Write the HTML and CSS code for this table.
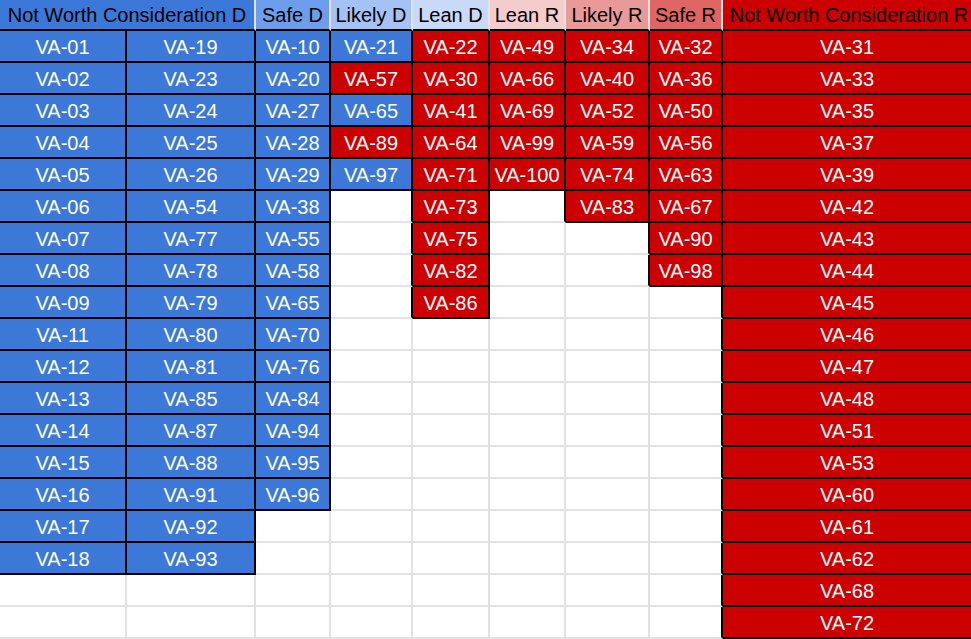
FILE: index.html
```html
<!DOCTYPE html>
<html lang="en">
<head>
<meta charset="utf-8">
<title>Virginia districts</title>
<link rel="stylesheet" href="styles.css">
</head>
<body>
<div class="sheet">
  <div class="h h1 span2">Not Worth Consideration D</div>
  <div class="h h2">Safe D</div>
  <div class="h h3">Likely D</div>
  <div class="h h4">Lean D</div>
  <div class="h h5">Lean R</div>
  <div class="h h6">Likely R</div>
  <div class="h h7">Safe R</div>
  <div class="h h8 last">Not Worth Consideration R</div>

  <div class="c b">VA-01</div><div class="c b">VA-19</div><div class="c b">VA-10</div><div class="c b">VA-21</div><div class="c r">VA-22</div><div class="c r">VA-49</div><div class="c r">VA-34</div><div class="c r">VA-32</div><div class="c r">VA-31</div>
  <div class="c b">VA-02</div><div class="c b">VA-23</div><div class="c b">VA-20</div><div class="c r">VA-57</div><div class="c r">VA-30</div><div class="c r">VA-66</div><div class="c r">VA-40</div><div class="c r">VA-36</div><div class="c r">VA-33</div>
  <div class="c b">VA-03</div><div class="c b">VA-24</div><div class="c b">VA-27</div><div class="c b">VA-65</div><div class="c r">VA-41</div><div class="c r">VA-69</div><div class="c r">VA-52</div><div class="c r">VA-50</div><div class="c r">VA-35</div>
  <div class="c b">VA-04</div><div class="c b">VA-25</div><div class="c b">VA-28</div><div class="c r">VA-89</div><div class="c r">VA-64</div><div class="c r">VA-99</div><div class="c r">VA-59</div><div class="c r">VA-56</div><div class="c r">VA-37</div>
  <div class="c b">VA-05</div><div class="c b">VA-26</div><div class="c b">VA-29</div><div class="c b">VA-97</div><div class="c r">VA-71</div><div class="c r">VA-100</div><div class="c r">VA-74</div><div class="c r">VA-63</div><div class="c r">VA-39</div>
  <div class="c b">VA-06</div><div class="c b">VA-54</div><div class="c b">VA-38</div><div class="c k"></div><div class="c r">VA-73</div><div class="c k"></div><div class="c r">VA-83</div><div class="c r">VA-67</div><div class="c r">VA-42</div>
  <div class="c b">VA-07</div><div class="c b">VA-77</div><div class="c b">VA-55</div><div class="c k"></div><div class="c r">VA-75</div><div class="c"></div><div class="c k"></div><div class="c r">VA-90</div><div class="c r">VA-43</div>
  <div class="c b">VA-08</div><div class="c b">VA-78</div><div class="c b">VA-58</div><div class="c k"></div><div class="c r">VA-82</div><div class="c"></div><div class="c k"></div><div class="c r">VA-98</div><div class="c r">VA-44</div>
  <div class="c b">VA-09</div><div class="c b">VA-79</div><div class="c b">VA-65</div><div class="c k"></div><div class="c r">VA-86</div><div class="c"></div><div class="c"></div><div class="c k"></div><div class="c r">VA-45</div>
  <div class="c b">VA-11</div><div class="c b">VA-80</div><div class="c b">VA-70</div><div class="c"></div><div class="c"></div><div class="c"></div><div class="c"></div><div class="c k"></div><div class="c r">VA-46</div>
  <div class="c b">VA-12</div><div class="c b">VA-81</div><div class="c b">VA-76</div><div class="c"></div><div class="c"></div><div class="c"></div><div class="c"></div><div class="c k"></div><div class="c r">VA-47</div>
  <div class="c b">VA-13</div><div class="c b">VA-85</div><div class="c b">VA-84</div><div class="c"></div><div class="c"></div><div class="c"></div><div class="c"></div><div class="c k"></div><div class="c r">VA-48</div>
  <div class="c b">VA-14</div><div class="c b">VA-87</div><div class="c b">VA-94</div><div class="c"></div><div class="c"></div><div class="c"></div><div class="c"></div><div class="c k"></div><div class="c r">VA-51</div>
  <div class="c b">VA-15</div><div class="c b">VA-88</div><div class="c b">VA-95</div><div class="c"></div><div class="c"></div><div class="c"></div><div class="c"></div><div class="c k"></div><div class="c r">VA-53</div>
  <div class="c b">VA-16</div><div class="c b">VA-91</div><div class="c b">VA-96</div><div class="c"></div><div class="c"></div><div class="c"></div><div class="c"></div><div class="c k"></div><div class="c r">VA-60</div>
  <div class="c b">VA-17</div><div class="c b">VA-92</div><div class="c"></div><div class="c"></div><div class="c"></div><div class="c"></div><div class="c"></div><div class="c k"></div><div class="c r">VA-61</div>
  <div class="c b">VA-18</div><div class="c b">VA-93</div><div class="c"></div><div class="c"></div><div class="c"></div><div class="c"></div><div class="c"></div><div class="c k"></div><div class="c r">VA-62</div>
  <div class="c"></div><div class="c"></div><div class="c"></div><div class="c"></div><div class="c"></div><div class="c"></div><div class="c"></div><div class="c k"></div><div class="c r">VA-68</div>
  <div class="c"></div><div class="c"></div><div class="c"></div><div class="c"></div><div class="c"></div><div class="c"></div><div class="c"></div><div class="c k"></div><div class="c r">VA-72</div>
</div>
</body>
</html>
```

FILE: styles.css
```css
html, body {
  margin: 0;
  padding: 0;
  background: #ffffff;
  overflow: hidden;
}

.sheet {
  display: grid;
  grid-template-columns: 127px 129px 75px 82px 77px 76px 84px 73px 250px;
  grid-template-rows: 31px repeat(19, 32px);
  width: 973px;
  font-family: "Liberation Sans", Arial, sans-serif;
  font-size: 20px;
}

.h, .c {
  box-sizing: border-box;
  text-align: center;
  white-space: nowrap;
  overflow: hidden;
}

.h {
  color: #000000;
  border-right: 2px solid #e3e3e3;
  border-bottom: 2px solid #000000;
  padding-top: 1px;
  line-height: 28px;
}

.span2 { grid-column: span 2; }

.h1 { background: #3c78d8; }
.h2 { background: #6d9eeb; }
.h3 { background: #a4c2f4; }
.h4 { background: #c9daf8; }
.h5 { background: #f4cccc; }
.h6 { background: #ea9999; }
.h7 { background: #e06666; }
.h8 { background: #cc0000; }
.last { padding-left: 4px; }

.c {
  border-right: 2px solid #e2e2e2;
  border-bottom: 2px solid #e2e2e2;
  padding-top: 2px;
  line-height: 28px;
  color: #ffffff;
}

.b {
  background: #3c78d8;
  border-right-color: #000000;
  border-bottom-color: #000000;
}

.r {
  background: #cc0000;
  border-right-color: #000000;
  border-bottom-color: #000000;
}

.k {
  border-right-color: #000000;
}
```
